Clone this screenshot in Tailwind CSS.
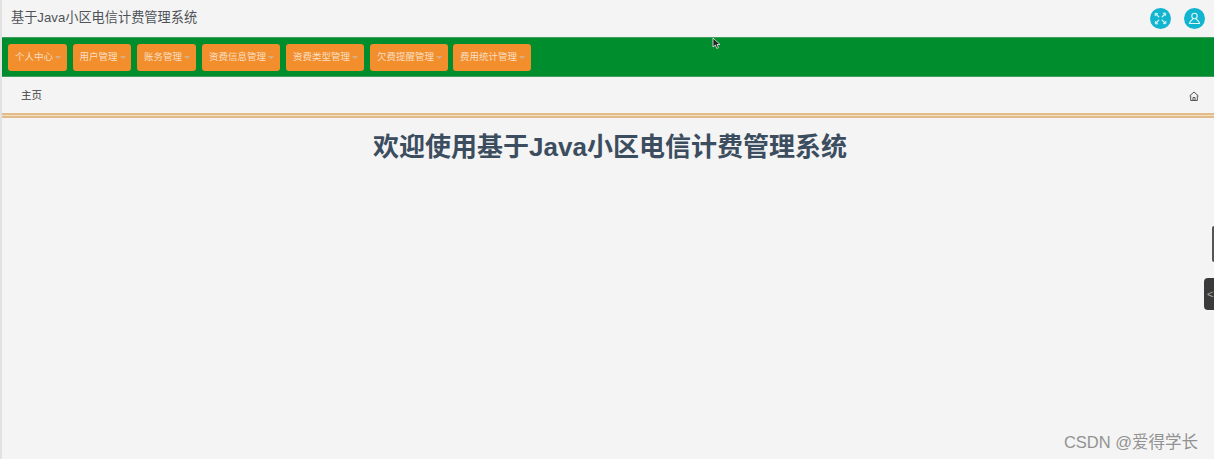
<!DOCTYPE html>
<html lang="zh-CN">
  <head>
    <meta charset="UTF-8" />
    <title>基于Java小区电信计费管理系统</title>
    <script src="https://cdn.jsdelivr.net/npm/@tailwindcss/browser@4"></script>
  </head>
  <body class="bg-[#f4f4f4] font-['Liberation_Sans','Noto_Sans_CJK_SC',sans-serif]">
    <div class="relative h-[459px] w-[1214px] overflow-hidden border-l-2 border-[#e2e2e2]">
      <!-- Header -->
      <header class="flex h-[37px] items-center justify-between pb-[1px] pl-[9px] pr-[9px]">
        <h1 class="text-[13.200px] text-[#4f5358]">基于Java小区电信计费管理系统</h1>
        <div class="flex gap-[13px]">
          <span class="flex h-[21px] w-[21px] items-center justify-center rounded-full bg-[#12b5cf]">
            <svg width="13" height="13" viewBox="0 0 13 13" fill="#dff7fb" stroke="#dff7fb" stroke-width="1.200" stroke-linecap="round">
              <path d="M4.800 4.800 2.500 2.500M8.200 4.800 10.500 2.500M4.800 8.200 2.500 10.500M8.200 8.200 10.500 10.500" />
              <path stroke-width=".6" d="M1.300 1.300h2.500L1.300 3.800zM11.700 1.300v2.500L9.200 1.300zM1.300 11.700V9.200l2.500 2.500zM11.700 11.700H9.200l2.500-2.500z" />
            </svg>
          </span>
          <span class="flex h-[21px] w-[21px] items-center justify-center rounded-full bg-[#12b5cf]">
            <svg width="13" height="13" viewBox="0 0 13 13" fill="none" stroke="#dff7fb" stroke-width="1.100">
              <circle cx="6.500" cy="4" r="2.700" />
              <path d="M5 6.800C4.500 8 1.500 8.500 1.500 11.500h10C11.500 8.500 8.500 8 8 6.800" />
            </svg>
          </span>
        </div>
      </header>

      <!-- Nav -->
      <nav class="flex h-10 items-center gap-[6px] border-y border-[#3f9e5c] bg-[#008d2d] pl-[6px]">
        <a class="flex h-[27px] w-[59px] items-center justify-center gap-[2px] rounded-[3px] bg-[#f28e2b] pl-px text-[9.500px] text-[#f9dfc4]">个人中心<i class="mt-[1px] border-x-[3px] border-t-[3px] border-x-transparent border-t-[#d3b08c]"></i></a>
        <a class="flex h-[27px] w-[58px] items-center justify-center gap-[2px] rounded-[3px] bg-[#f28e2b] pl-px text-[9.500px] text-[#f9dfc4]">用户管理<i class="mt-[1px] border-x-[3px] border-t-[3px] border-x-transparent border-t-[#d3b08c]"></i></a>
        <a class="flex h-[27px] w-[59px] items-center justify-center gap-[2px] rounded-[3px] bg-[#f28e2b] pl-px text-[9.500px] text-[#f9dfc4]">账务管理<i class="mt-[1px] border-x-[3px] border-t-[3px] border-x-transparent border-t-[#d3b08c]"></i></a>
        <a class="flex h-[27px] w-[78px] items-center justify-center gap-[2px] rounded-[3px] bg-[#f28e2b] pl-px text-[9.500px] text-[#f9dfc4]">资费信息管理<i class="mt-[1px] border-x-[3px] border-t-[3px] border-x-transparent border-t-[#d3b08c]"></i></a>
        <a class="flex h-[27px] w-[78px] items-center justify-center gap-[2px] rounded-[3px] bg-[#f28e2b] pl-px text-[9.500px] text-[#f9dfc4]">资费类型管理<i class="mt-[1px] border-x-[3px] border-t-[3px] border-x-transparent border-t-[#d3b08c]"></i></a>
        <a class="flex h-[27px] w-[78px] items-center justify-center gap-[2px] rounded-[3px] bg-[#f28e2b] pl-px text-[9.500px] text-[#f9dfc4]">欠费提醒管理<i class="mt-[1px] border-x-[3px] border-t-[3px] border-x-transparent border-t-[#d3b08c]"></i></a>
        <a class="ml-[-1px] flex h-[27px] w-[78px] items-center justify-center gap-[2px] rounded-[3px] bg-[#f28e2b] pl-px text-[9.500px] text-[#f9dfc4]">费用统计管理<i class="mt-[1px] border-x-[3px] border-t-[3px] border-x-transparent border-t-[#d3b08c]"></i></a>
      </nav>

      <!-- Breadcrumb -->
      <div class="flex h-[36px] items-center justify-between pl-[19px] pr-[15px] pt-[2px] text-[10.500px] text-[#3c3c3c]">
        <span>主页</span>
        <svg width="10" height="10" viewBox="0 0 10 10" fill="none" stroke="#555" stroke-width="1">
          <path d="M.5 5 5 1l4.500 4M1.700 4.500V9.500h6.600V4.500M4 9.500V6.500h2v3" />
        </svg>
      </div>
      <div class="h-[5px] border-y-2 border-[#e3bb88] bg-[#f1e0c8]"></div>

      <!-- Content -->
      <h2 class="mt-[11px] pl-1 text-center text-[26px] leading-[36px] font-bold text-[#3b4d5e]">欢迎使用基于Java小区电信计费管理系统</h2>

      <!-- Cursor -->
      <svg class="absolute left-[710px] top-[37px]" width="10" height="13" viewBox="0 0 10 13">
        <path d="M1 1v9l2.300-2 1.500 3.500 1.700-.8L5 7.500h3z" fill="#222" stroke="#eee" stroke-width=".8" />
      </svg>

      <!-- Side tabs -->
      <div class="absolute right-0 top-[226px] h-[36px] w-[2px] rounded-l-sm bg-[#555]"></div>
      <div class="absolute right-0 top-[278px] flex h-[32px] w-[10px] items-center rounded-l-sm bg-[#3a3a3a] pl-[3px] text-[11px] leading-none text-[#aaa]">&lt;</div>

      <!-- Watermark -->
      <div class="absolute bottom-[7px] right-[16px] text-[16.500px] leading-5 text-[#929292]">CSDN @爱得学长</div>
    </div>
  </body>
</html>
